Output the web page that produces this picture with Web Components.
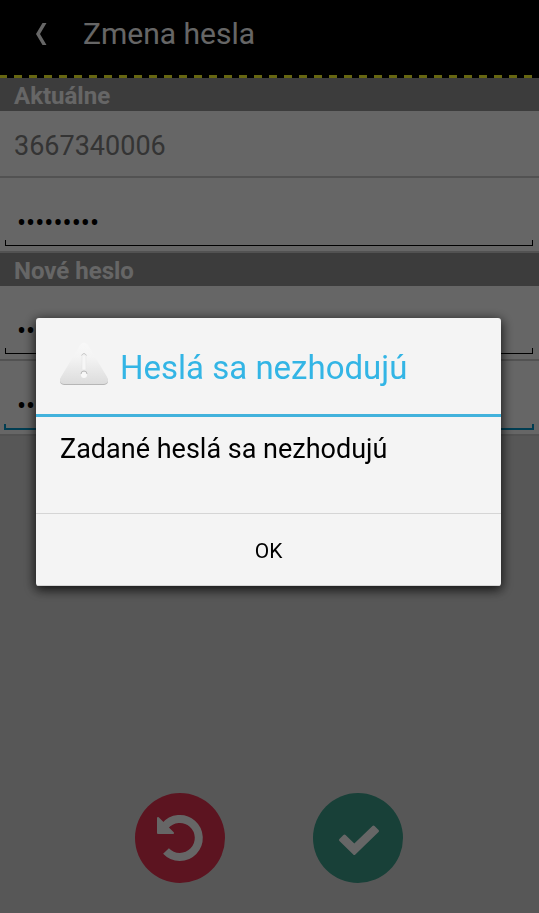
<!DOCTYPE html>
<html lang="sk">
<head>
<meta charset="utf-8">
<meta name="viewport" content="width=device-width, initial-scale=1">
<title>Zmena hesla</title>
<style>
    body {
        margin: 0;
        font-family: Roboto, "Noto Sans", sans-serif;
    }
</style>
</head>
<body>
<password-screen></password-screen>

<script>
window.customElements.define('app-header', class extends HTMLElement {
    constructor() {
        super();

        this.attachShadow({ mode: 'open' });
        this.shadowRoot.innerHTML = `
            <style>
                :host {
                    display: block;
                    background: #000;
                    color: #fff;
                }
                header {
                    display: flex;
                    align-items: center;
                    height: 67px;
                    padding: 0 0 8px 26px;
                    gap: 27px;
                }
                button {
                    display: flex;
                    justify-content: center;
                    width: 30px;
                    padding: 0;
                    border: 0;
                    background: none;
                    color: inherit;
                }
                h1 {
                    margin: 0;
                    font-size: 30px;
                    font-weight: 400;
                    line-height: 36px;
                }
                .dashes {
                    height: 3px;
                    background: repeating-linear-gradient(90deg, #ffff2b 0 7px, #000 7px 14px, #ffff2b 14px 15px);
                }
            </style>
            <header>
                <button type="button" aria-label="Späť">
                    <svg width="12" height="22" viewBox="0 0 12 22" fill="currentColor" aria-hidden="true">
                        <path d="M7.5 0h4L5 11l6.5 11h-4L1 11z"/>
                    </svg>
                </button>
                <h1><slot></slot></h1>
            </header>
            <div class="dashes"></div>
        `;
    }
});

window.customElements.define('form-section', class extends HTMLElement {
    constructor() {
        super();

        this.attachShadow({ mode: 'open' });
        this.shadowRoot.innerHTML = `
            <style>
                :host {
                    display: block;
                }
                h2 {
                    margin: 0;
                    padding: 3px 14px 0;
                    background: #969696;
                    color: #fff;
                    font-size: 24px;
                    font-weight: 700;
                    line-height: 30px;
                }
            </style>
            <section>
                <h2><slot name="title"></slot></h2>
                <slot></slot>
            </section>
        `;
    }
});

window.customElements.define('form-row', class extends HTMLElement {
    constructor() {
        super();

        this.attachShadow({ mode: 'open' });
        this.shadowRoot.innerHTML = `
            <style>
                :host {
                    display: block;
                    background: #fff;
                    border-bottom: 2px solid #ccc;
                    color: #828282;
                    font-size: 27px;
                    line-height: 33px;
                }
                div {
                    padding: 19px 14px 13px;
                }
            </style>
            <div><slot></slot></div>
        `;
    }
});

window.customElements.define('password-field', class extends HTMLElement {
    constructor() {
        super();

        this.attachShadow({ mode: 'open' });
        this.shadowRoot.innerHTML = `
            <style>
                :host {
                    --line: #000;
                    --thick: 1px;
                    display: block;
                    background: #fff;
                    border-bottom: 2px solid #ccc;
                }
                :host([active]) {
                    --line: #0099cc;
                    --thick: 2px;
                }
                div {
                    display: flex;
                    padding: 15px 6px 5px 5px;
                }
                :host([active]) div {
                    padding: 15px 5px 4px 4px;
                }
                input {
                    flex: 1;
                    min-width: 0;
                    height: 53px;
                    box-sizing: border-box;
                    padding: 6px 12px 0;
                    border: 0;
                    outline: 0;
                    background:
                        linear-gradient(var(--line), var(--line)) left bottom / 100% var(--thick) no-repeat,
                        linear-gradient(var(--line), var(--line)) left bottom / var(--thick) 6px no-repeat,
                        linear-gradient(var(--line), var(--line)) right bottom / var(--thick) 6px no-repeat;
                    color: #000;
                    font: 27px Roboto, "Noto Sans", sans-serif;
                }
                :host([active]) input {
                    height: 54px;
                    padding: 6px 13px 0;
                }
            </style>
            <div><input type="password" value="123456789"></div>
        `;
        this.shadowRoot.querySelector('input').setAttribute('aria-label', this.getAttribute('label'));
    }
});

window.customElements.define('round-button', class extends HTMLElement {
    constructor() {
        super();

        this.attachShadow({ mode: 'open' });
        this.shadowRoot.innerHTML = `
            <style>
                :host {
                    display: block;
                }
                button {
                    display: block;
                    width: 90px;
                    height: 90px;
                    padding: 0;
                    border: 0;
                    border-radius: 50%;
                    background: var(--button-color, #888);
                    color: #fff;
                }
                ::slotted(svg) {
                    display: block;
                    width: 90px;
                    height: 90px;
                    color: #fff;
                }
            </style>
            <button type="button"><slot></slot></button>
        `;
        this.shadowRoot.querySelector('button').setAttribute('aria-label', this.getAttribute('label'));
    }
});

window.customElements.define('alert-dialog', class extends HTMLElement {
    constructor() {
        super();

        this.attachShadow({ mode: 'open' });
        this.shadowRoot.innerHTML = `
            <style>
                :host {
                    position: fixed;
                    inset: 0;
                    display: flex;
                    align-items: center;
                    justify-content: center;
                    padding: 0 38px 9px 36px;
                    background: rgba(0, 0, 0, .6);
                }
                dialog {
                    position: static;
                    flex: 1;
                    max-width: 560px;
                    margin: 0;
                    padding: 0;
                    border: 0;
                    border-radius: 3px;
                    overflow: hidden;
                    background: #f4f4f4;
                    color: #000;
                    box-shadow: 0 3px 12px 1px rgba(0, 0, 0, .8);
                }
                header {
                    display: flex;
                    align-items: center;
                    gap: 12px;
                    height: 96px;
                    border-bottom: 3px solid #42b2dc;
                    padding: 0 24px;
                    color: #33b5e5;
                }
                h2 {
                    margin: 0;
                    padding-top: 3px;
                    font-size: 33px;
                    font-weight: 400;
                    line-height: 40px;
                }
                p {
                    margin: 0;
                    padding: 16px 24px 47px;
                    font-size: 27px;
                    line-height: 33px;
                }
                button {
                    display: block;
                    width: 100%;
                    height: 73px;
                    padding: 2px 0 0;
                    border: 0;
                    border-top: 1px solid #d5d5d5;
                    border-bottom: 1px solid #d5d5d5;
                    background: none;
                    color: #000;
                    font: 21px Roboto, "Noto Sans", sans-serif;
                }
            </style>
            <dialog open role="alertdialog" aria-labelledby="title" aria-describedby="message">
                <header>
                    <svg width="48" height="48" viewBox="0 0 48 48" aria-hidden="true">
                        <defs>
                            <linearGradient id="body" x1="0" y1="0" x2="0" y2="1">
                                <stop offset="0" stop-color="#f8f8f8"/>
                                <stop offset=".35" stop-color="#f4f4f4"/>
                                <stop offset="1" stop-color="#dcdcdc"/>
                            </linearGradient>
                            <linearGradient id="edge" x1="0" y1="0" x2="0" y2="1">
                                <stop offset=".6" stop-color="#b4b4b4" stop-opacity="0"/>
                                <stop offset="1" stop-color="#b4b4b4"/>
                            </linearGradient>
                        </defs>
                        <path fill="url(#edge)" d="M20 4q4-5 8 0l19 32q3 6-3 7H4q-6-1-3-7z"/>
                        <path fill="url(#body)" d="M20 3q4-5 8 0l19 32q3 6-3 7H4q-6-1-3-7z"/>
                        <rect x="22" y="13" width="4" height="15" rx="1" fill="#f6f6f6" stroke="#e6e6e6" stroke-width=".6"/>
                        <path d="M21.5 13.5q2.500-4 5 0" fill="none" stroke="#c8c8c8"/>
                        <circle cx="24" cy="33" r="3" fill="#f8f8f8"/>
                        <path d="M21 32a3 3 0 0 1 6 0" fill="none" stroke="#bbb"/>
                    </svg>
                    <h2 id="title"><slot name="title"></slot></h2>
                </header>
                <p id="message"><slot></slot></p>
                <button type="button">OK</button>
            </dialog>
        `;
    }
});

window.customElements.define('password-screen', class extends HTMLElement {
    constructor() {
        super();

        this.attachShadow({ mode: 'open' });
        this.shadowRoot.innerHTML = `
            <style>
                :host {
                    display: flex;
                    flex-direction: column;
                    min-height: 100vh;
                    background: #dadada;
                }
                footer {
                    display: flex;
                    justify-content: center;
                    gap: 88px;
                    margin-top: auto;
                    padding: 30px 31px 30px 30px;
                }
                .reset {
                    --button-color: #e63250;
                }
                .confirm {
                    --button-color: #3ca08c;
                }
            </style>
            <app-header>Zmena hesla</app-header>
            <form-section>
                <span slot="title">Aktuálne</span>
                <form-row>3667340006</form-row>
                <password-field label="Aktuálne heslo"></password-field>
            </form-section>
            <form-section>
                <span slot="title">Nové heslo</span>
                <password-field label="Nové heslo"></password-field>
                <password-field label="Zopakujte nové heslo" active></password-field>
            </form-section>
            <footer>
                <round-button class="reset" label="Obnoviť">
                    <svg viewBox="0 0 90 90" aria-hidden="true">
                        <path d="M30 33a19 19 0 1 1 1 25" fill="none" stroke="currentColor" stroke-width="8"/>
                        <path d="M23 25l15 15H23z" fill="currentColor" stroke="currentColor" stroke-width="2" stroke-linejoin="round"/>
                    </svg>
                </round-button>
                <round-button class="confirm" label="Potvrdiť">
                    <svg viewBox="0 0 90 90" aria-hidden="true">
                        <path d="M27.5 47l4-4 9.800 9.500L60.500 34l4 4-23.200 22.500z" fill="currentColor" stroke="currentColor" stroke-width="3" stroke-linejoin="round"/>
                    </svg>
                </round-button>
            </footer>
            <alert-dialog>
                <span slot="title">Heslá sa nezhodujú</span>
                Zadané heslá sa nezhodujú
            </alert-dialog>
        `;
    }
});
</script>
</body>
</html>
